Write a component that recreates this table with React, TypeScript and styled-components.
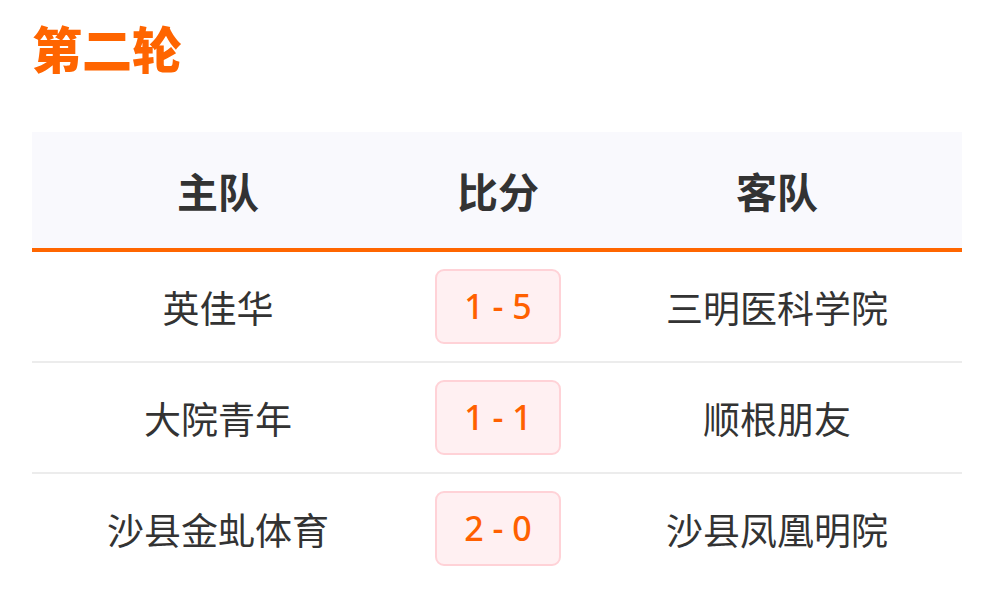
import styled, { createGlobalStyle } from 'styled-components';

const GlobalStyle = createGlobalStyle`
  body {
    margin: 0;
    background: #ffffff;
    font-family: "Noto Sans CJK SC", "Noto Sans", sans-serif;
    color: #333333;
  }
`;

type Match = {
  home: string;
  score: string;
  away: string;
};

const matches: Match[] = [
  { home: '英佳华', score: '1 - 5', away: '三明医科学院' },
  { home: '大院青年', score: '1 - 1', away: '顺根朋友' },
  { home: '沙县金虬体育', score: '2 - 0', away: '沙县凤凰明院' },
];

export default function App() {
  return (
    <>
      <GlobalStyle />
      <Page>
        <Title>第二轮</Title>
        <Table>
          <HeaderRow>
            <HeadCell>主队</HeadCell>
            <HeadCell>比分</HeadCell>
            <HeadCell>客队</HeadCell>
          </HeaderRow>
          {matches.map((m, i) => (
            <Row key={m.home} $last={i === matches.length - 1}>
              <TeamCell>{m.home}</TeamCell>
              <ScoreCell>
                <ScoreBadge>{m.score}</ScoreBadge>
              </ScoreCell>
              <TeamCell>{m.away}</TeamCell>
            </Row>
          ))}
        </Table>
      </Page>
    </>
  );
}

const Page = styled.div`
  padding: 14px 20px 0 32px;
`;

const Title = styled.h2`
  margin: 0;
  font-size: 50px;
  line-height: 66px;
  font-weight: 900;
  color: #ff6500;
`;

const Table = styled.div`
  margin-top: 52px;
  width: 930px;
`;

const HeaderRow = styled.div`
  display: grid;
  grid-template-columns: 372px 188px 370px;
  height: 116px;
  align-items: center;
  background: #f9f9fd;
  border-bottom: 4px solid #ff6600;
`;

const HeadCell = styled.div`
  text-align: center;
  font-size: 41px;
  font-weight: 700;
  color: #333333;
`;

const Row = styled.div<{ $last?: boolean }>`
  display: grid;
  grid-template-columns: 372px 188px 370px;
  height: 109px;
  align-items: center;
  border-bottom: 2px solid ${(p) => (p.$last ? 'transparent' : '#ececec')};
`;

const TeamCell = styled.div`
  text-align: center;
  font-size: 37px;
  color: #333333;
`;

const ScoreCell = styled.div`
  display: flex;
  justify-content: center;
`;

const ScoreBadge = styled.span`
  display: inline-block;
  padding: 12px 27px;
  font-family: "Noto Sans", "Open Sans", sans-serif;
  font-size: 34px;
  line-height: 47px;
  font-weight: 500;
  color: #ff6000;
  background: #fff0f2;
  border: 2px solid #ffd2d7;
  border-radius: 9px;
`;
